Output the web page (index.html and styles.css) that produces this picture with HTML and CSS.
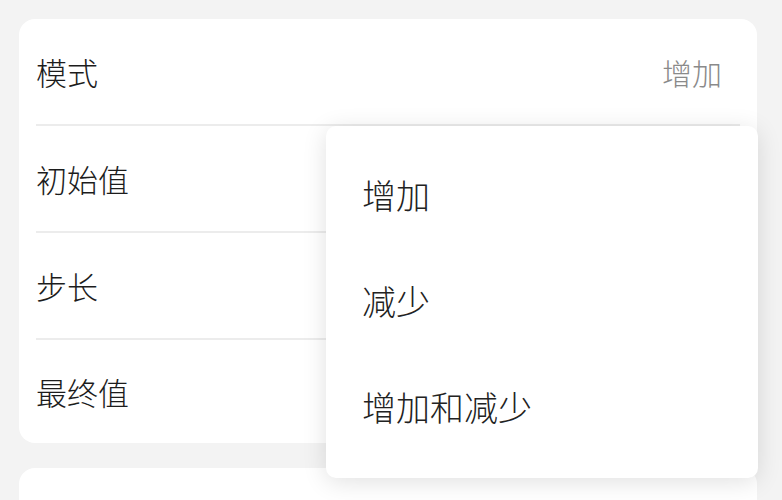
FILE: index.html
```html
<!DOCTYPE html>
<html lang="zh-CN">
<head>
  <meta charset="UTF-8" />
  <meta name="viewport" content="width=device-width, initial-scale=1.0"/>
  <title>设置</title>
  <link rel="stylesheet" href="styles.css">
</head>
<body>
  <div class="page">
    <div class="card">
      <div class="row">
        <span class="label">模式</span>
        <span class="value">增加</span>
      </div>
      <div class="row"><span class="label">初始值</span></div>
      <div class="row"><span class="label">步长</span></div>
      <div class="row"><span class="label">最终值</span></div>
    </div>
    <div class="card card-next"></div>

    <div class="menu">
      <div class="menu-item">增加</div>
      <div class="menu-item">减少</div>
      <div class="menu-item">增加和减少</div>
    </div>
  </div>
</body>
</html>
```

FILE: styles.css
```css
* { margin: 0; padding: 0; box-sizing: border-box; }
body, html {
  font-family: "Noto Sans CJK SC", "Noto Sans", sans-serif;
  font-weight: 300;
  background-color: #f3f3f3;
  color: #1c1c1c;
  height: 100%;
  overflow: hidden;
}
.page {
  position: relative;
  padding: 19px 25px 0 19px;
  display: flex;
  flex-direction: column;
  gap: 25px;
}
.card {
  background: #fff;
  border-radius: 16px;
  padding: 0 17px;
}
.row {
  height: 107px;
  display: flex;
  align-items: center;
  justify-content: space-between;
  border-bottom: 2px solid #ececec;
  padding-right: 18px;
}
.row:last-child {
  border-bottom: none;
  height: 103px;
}
.label {
  font-size: 31px;
  line-height: 1;
}
.value {
  font-size: 30px;
  color: #8a8a8a;
  line-height: 1;
}
.card-next {
  height: 80px;
}
.menu {
  position: absolute;
  left: 326px;
  top: 126px;
  width: 432px;
  padding: 15px 0 19px;
  background: #fff;
  border-radius: 10px;
  box-shadow: 0 4px 24px rgba(0,0,0,0.12);
}
.menu-item {
  height: 106px;
  display: flex;
  align-items: center;
  padding-left: 36px;
  font-size: 34px;
  color: #222;
}
```
